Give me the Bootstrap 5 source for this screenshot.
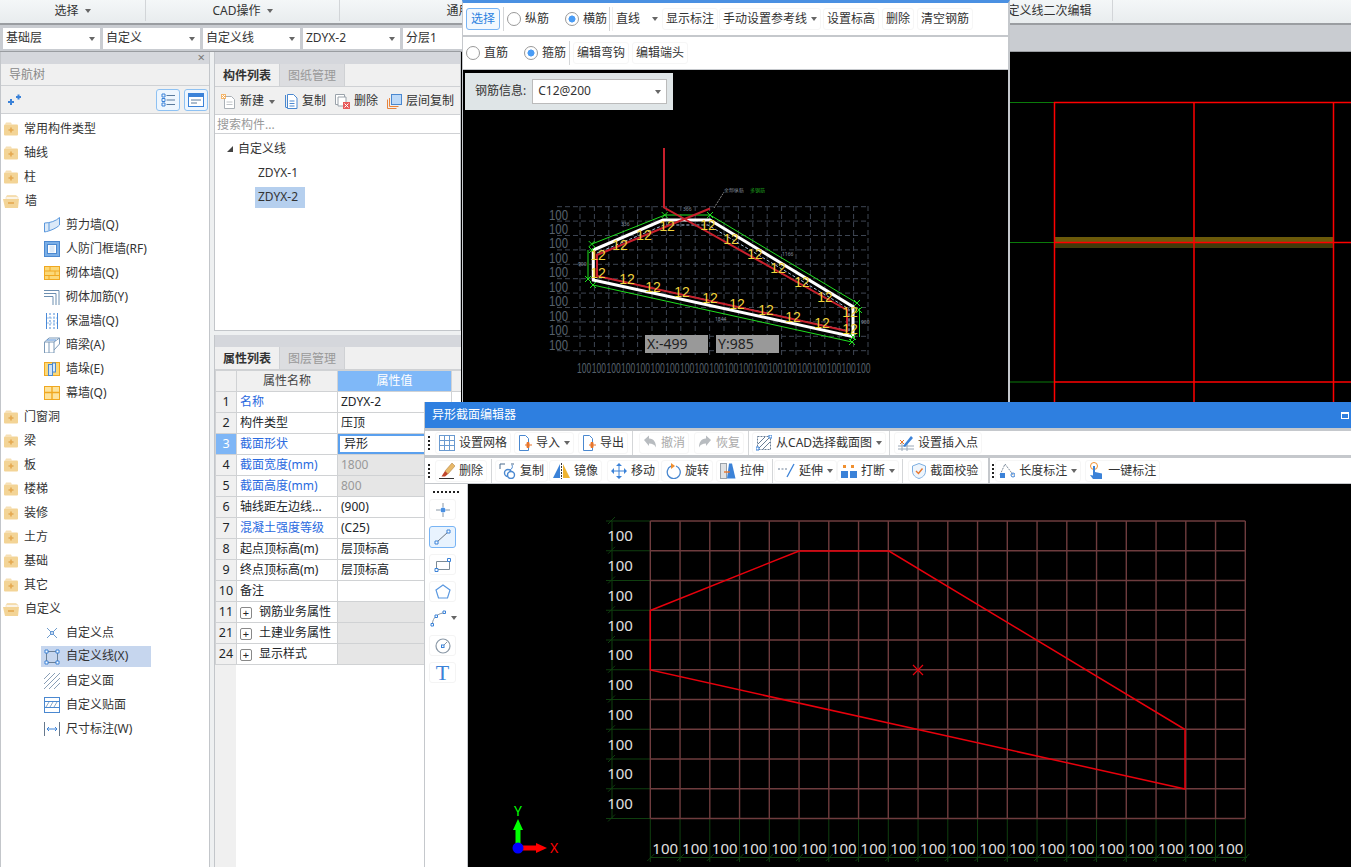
<!DOCTYPE html>
<html lang="zh">
<head>
<meta charset="UTF-8">
<title>异形截面编辑器</title>
<link rel="stylesheet" href="https://cdn.jsdelivr.net/npm/bootstrap@5.3.0/dist/css/bootstrap.min.css">
<style>
html, body { height: 867px; overflow: hidden; }
body { position: relative; width: 1351px; font: 12px/1.2 "Noto Sans", "Noto Sans CJK SC", sans-serif; color: #333; background: #eef0f1; }
.dropdown-toggle::after { border-top: 4px solid #666; border-left: 3px solid transparent; border-right: 3px solid transparent; border-bottom: 0; margin-left: 6px; vertical-align: 2px; }
.gl1 { margin-left: 1px; } .gl2 { margin-left: 2px; } .gl3 { margin-left: 3px; } .gl5 { margin-left: 5px; } .gl6 { margin-left: 6px; }

/* top menu */
.menu-bar { height: 25px; background: linear-gradient(#f4f7f8, #e8ecee); border-bottom: 2px solid #9a9da1; }
.menu-cell { height: 21px; padding-top: 2px; border-right: 1px solid #d2d5d8; justify-content: center; color: #333; }
.mc1 { width: 146px; } .mc2 { width: 194px; } .mc3 { width: 274px; } .mc4 { width: 361px; } .mc5 { width: 138px; }
.sel-bar { height: 27px; background: #c9ccd1; border-bottom: 1px solid #9a9da1; padding: 3px 0 0 3px; gap: 3px; }
.sel-box { width: 97px; height: 21px; background: #fff; padding: 0 3px; justify-content: space-between; }
.sel-box.dropdown-toggle::after { margin-right: 2px; }

/* left nav */
.main-row { height: 815px; }
.nav-side { width: 210px; background: #fff; border-left: 1px solid #c3c6ca; border-right: 1px solid #c3c6ca; }
.strip { height: 12px; background: #d5d7dc; color: #777; font-size: 13px; line-height: 11px; }
.side-title { height: 22px; background: #f0f0f0; color: #888; padding: 2px 0 0 8px; border-bottom: 1px solid #cfd1d4; }
.side-tools { height: 28px; background: #f0f0f0; border-bottom: 1px solid #cfd1d4; padding: 0 1px 0 7px; }
.view-btn { width: 24px; height: 22px; border: 1px solid #8ec1f2; border-radius: 3px; background: #eef6fe; margin-left: 4px; padding: 0; }
.nav-tree { padding-top: 3px; }
.nav-tree .list-group-item { height: 24px; padding: 0 0 0 2px; border: 0; gap: 5px; font-size: 12px; color: #333; background: transparent; }
.nav-tree .list-group-item.leaf { padding-left: 43px; gap: 6px; }
.leaf-on { background: #c6d6ee !important; margin-left: 40px; width: 110px; padding-left: 3px !important; height: 21px !important; margin-top: 1px; margin-bottom: 2px; }

/* middle panels */
.mid-col { width: 247px; margin-left: 4px; }
.mid-top { height: 279px; border: 1px solid #c3c6ca; border-top: 0; background: #fff; }
.mid-bottom { height: 532px; margin-top: 4px; border-left: 1px solid #c3c6ca; background: linear-gradient(90deg, #f0f0f0 21px, #fff 21px); }
.tab-row { height: 23px; background: #f0f0f0; border-bottom: 1px solid #cfd1d4; }
.tab-row .nav-link { width: 65px; height: 22px; padding: 0; line-height: 23px; text-align: center; font-size: 12px; color: #999; background: #dcdde0; border-right: 1px solid #cfd1d4; }
.tab-row .nav-link.active { color: #333; background: #f0f0f0; font-weight: 700; }
.mid-tools { height: 28px; background: #f0f0f0; border-bottom: 1px solid #cfd1d4; padding: 2px 0 0 6px; overflow: hidden; }
.mid-tool { gap: 4px; padding: 0; margin-right: 9px; font-size: 12px; color: #333; border: 0; background: none; flex: none; white-space: nowrap; }
.mid-tool.dropdown-toggle::after { margin-left: 1px; }
.find-box.form-control { height: 19px; border: 0; border-bottom: 1px solid #cfd1d4; border-radius: 0; padding: 1px 2px 0; font-size: 12px; }
.find-box::placeholder { color: #999; }
.part-tree { padding-top: 3px; }
.part-row { height: 24px; }
.part-open { padding-left: 12px; gap: 5px; }
.open-tri { width: 0; height: 0; border-bottom: 6px solid #444; border-left: 6px solid transparent; }
.part-leaf { margin-left: 40px; padding: 0 4px 0 3px; width: 50px; height: 21px; white-space: nowrap; }
.part-on { background: #b5cfee; margin-top: 2px; }

/* property table */
.prop-table.table { table-layout: fixed; width: 246px; margin: 0; --bs-table-bg: transparent; border-color: #d0d2d4; }
.prop-table th, .prop-table td { height: 21px; padding: 0 3px; font-size: 12px; font-weight: 400; line-height: 20px; white-space: nowrap; overflow: hidden; vertical-align: middle; }
.prop-table thead th { background: #f0f0f0; text-align: center; color: #444; }
.prop-table thead th.val-head { background: #7fb8f8; color: #fff; }
.prop-table .num-cell { background: #f0f0f0; text-align: center; padding: 0; font-size: 12.5px; }
.prop-table .num-on { background: #7eb6f6; color: #fff; }
.blue-name { color: #2a6ae0; }
.val-off { background: #e6e6e6 !important; color: #999; }
.val-group { background: #e6e6e6 !important; }
.prop-table.table > tbody > tr > td.val-edit { box-shadow: inset 0 0 0 2px #5aa0ee; padding-left: 6px; }
.plus-box { display: inline-block; width: 12px; height: 12px; border: 1px solid #888; border-radius: 2px; line-height: 9px; text-align: center; margin: 0 7px 0 0; font-size: 11px; vertical-align: -1px; }

/* back canvas */
.back-canvas { background: #000; }

/* floating windows */
.rebar-win { position: absolute; left: 462px; top: 0; width: 548px; height: 402px; background: #c5c8cc; border-top: 3px solid #4a90e2; border-left: 1px solid #c5c8cc; border-right: 2px solid #c5c8cc; }
.bar-row { height: 32px; background: #fff; padding-left: 3px; margin-bottom: 2px; }
.tb-item.btn { height: 22px; padding: 0 3px; border: 1px solid #f6f6f6; border-radius: 3px; font-size: 12px; line-height: 1; color: #333; background: #fff; gap: 4px; white-space: nowrap; flex: none; }
.tb-item.dropdown-toggle::after { margin-left: 0; }
.tb-on.btn { padding: 0 4px; border-color: #78b4f4; color: #2a80e0; background: #f2f8fe; }
.tb-off.btn { color: #aaa; opacity: 1; }
.rad-item { gap: 4px; flex: none; }
.rad-item .form-check-input { width: 14px; height: 14px; margin: 0; border-color: #999; }
.rad-item .form-check-input:checked { background-color: #fff; background-image: radial-gradient(circle, #4a9cf5 0 3.2px, transparent 3.8px); border-color: #999; }
.v-sep { width: 1px; height: 24px; background: #d4d6d8; flex: none; }
.thick-sep { width: 2px; height: 100%; background: #c5c8cc; flex: none; }
.line-pick { width: 46px; height: 24px; padding-left: 3px; border-left: 1px solid #f0f0f0; flex: none; justify-content: space-between; }
.line-pick.dropdown-toggle::after { margin: 0; }
.rebar-view { display: block; background: #000; width: 545px; height: 332px; margin-top: -1px; }
.rebar-info { position: absolute; left: 2px; top: 70px; width: 208px; height: 37px; background: #dfe5e7; padding: 6px 6px 6px 10px; gap: 6px; white-space: nowrap; }
.rebar-pick { width: 135px; height: 25px; background: #fff; border: 1px solid #bbb; padding: 0 5px; justify-content: space-between; flex: none; }

.edit-win { position: absolute; left: 424px; top: 402px; width: 927px; height: 465px; background: #c5c8cc; border-left: 1px solid #c5c8cc; }
.edit-title { height: 26px; background: #2e7fe0; color: #fff; padding: 0 2px 0 7px; justify-content: space-between; }
.max-mark { width: 8px; height: 7px; border: 1px solid #fff; border-top-width: 2px; }
.edit-bar { height: 26px; background: #fff; padding: 0 0 0 3px; border-bottom: 1px solid #c5c8cc; }
.edit-bar.first-bar { margin-top: 3px; height: 27px; border-bottom-width: 3px; }
.grip-dots { width: 2px; height: 14px; background: repeating-linear-gradient(#222 0 2px, transparent 2px 4px); flex: none; }
.edit-body { height: 383px; }
.draw-palette { width: 43px; background: #fff; border-right: 1px solid #c5c8cc; padding-top: 7px; flex: none; }
.dots-h { width: 26px; height: 2px; margin: 0 0 6px 8px; background: repeating-linear-gradient(90deg, #222 0 2px, transparent 2px 4px); }
.draw-tool { width: 27px; height: 21px; margin: 0 0 6px 4px; padding: 0; border: 1px solid #f4f4f4; border-radius: 3px; background: #fff; }
.draw-tool.on { height: 22px; border-color: #78b4f4; background: #e8f3fe; }
.draw-tool.bare { border-color: transparent; width: 36px; }
.t-glyph { font: 22px/1 "Liberation Serif", serif; color: #3b82d8; }
.edit-view { display: block; background: #000; flex: 1; }
svg { flex: none; }
.cad-dim { font: 5px "Noto Sans", sans-serif; fill: #8a93a0; }
</style>
</head>
<body>
<svg width="0" height="0" class="position-absolute">
  <symbol id="i-folder" viewBox="0 0 16 14"><path d="M2 2.500 3 .5h5l1 2z" fill="#f6e0b4"/><rect x="1" y="2.500" width="14" height="11" rx="1" fill="#f3d496"/><path d="M8 5.500v5M5.500 8h5" stroke="#e4a850" stroke-width="1.600"/></symbol>
  <symbol id="i-folder-open" viewBox="0 0 17 14"><path d="M3 3 4 1h9l2 2z" fill="#f6e0b4"/><path d="M3 3h12v2H3z" fill="#fff" stroke="#ecd29c" stroke-width=".5"/><path d="M0 5h16l-1 9H2z" fill="#f3d496"/><path d="M5 9h6" stroke="#e4a850" stroke-width="1.600"/></symbol>
  <symbol id="i-shear" viewBox="0 0 16 16"><path d="M.5 6C6 6 12 4 15.500 .5V8C13 11 6 14 .5 15z" fill="#dbe9f8" stroke="#5b98dc"/><path d="M.5 6V15M5 5.500v8" stroke="#5b98dc"/></symbol>
  <symbol id="i-door" viewBox="0 0 16 16"><rect x=".5" y=".5" width="15" height="15" fill="#7aaee6" stroke="#4a88d0"/><rect x="3.500" y="3.500" width="9" height="9" fill="#fff" stroke="#4a88d0"/><rect x="5.500" y="4.500" width="5" height="7" fill="#dbe9f8"/></symbol>
  <symbol id="i-brick" viewBox="0 0 16 14"><rect x=".5" y=".5" width="15" height="13" fill="#fbd878" stroke="#f0a820"/><path d="M.5 5h15M.5 9.500h15M6 .5V5M11 5v4.500M5 9.500v4" stroke="#f0a820"/></symbol>
  <symbol id="i-rebar" viewBox="0 0 16 16"><path d="M0 1.500h15V16M0 4.500h12V16M0 7.500h9V16" fill="none" stroke="#6d8fb0"/></symbol>
  <symbol id="i-insul" viewBox="0 0 16 16"><path d="M2.500 0v16M13.500 0v16" stroke="#4a8ad8"/><path d="M6 0v16M10 0v16" stroke="#4a8ad8" stroke-dasharray="2 1.500"/><path d="M3 5h10M3 10h10" stroke="#9cc2ea" stroke-dasharray="2 1"/></symbol>
  <symbol id="i-beam" viewBox="0 0 16 16"><path d="M.5 5 5 1h10.500v6L10 13v3H.5z" fill="#fff" stroke="#7c9ab8"/><path d="M.5 5H10v8M10 5l5.500-4M5 5v11" fill="none" stroke="#7c9ab8"/><path d="M3 3h9" stroke="#4a8ad8"/></symbol>
  <symbol id="i-pier" viewBox="0 0 16 14"><rect x=".5" y=".5" width="15" height="13" fill="#fbd878" stroke="#f0a820"/><rect x="4.500" y="2.500" width="4" height="11" fill="#cfe2f7" stroke="#4a88d0"/><rect x="8.500" y="1" width="3" height="9" fill="#dbe9f8" stroke="#4a88d0"/></symbol>
  <symbol id="i-curtain" viewBox="0 0 16 14"><rect x=".5" y=".5" width="15" height="13" fill="#fde39c" stroke="#f0a820"/><path d="M.5 6.500h15M8 .5v13" stroke="#f0a820" stroke-width="1.400"/></symbol>
  <symbol id="i-point" viewBox="0 0 16 16"><path d="M3 3l10 10M13 3 3 13" stroke="#6f9ccc"/><circle cx="8" cy="8" r="1.500" fill="#fff" stroke="#4a88d0"/></symbol>
  <symbol id="i-line" viewBox="0 0 16 16"><rect x="2.500" y="2.500" width="11" height="11" fill="none" stroke="#6a7f96"/><path d="M1 1h3v3H1zM12 1h3v3h-3zM1 12h3v3H1zM12 12h3v3h-3z" fill="#fff" stroke="#3b82d8"/></symbol>
  <symbol id="i-face" viewBox="0 0 16 16"><path d="M0 6 6 0M0 11 11 0M0 16 16 0M5 16 16 5M10 16l6-6" stroke="#8a9fb6"/></symbol>
  <symbol id="i-paste" viewBox="0 0 16 16"><rect x=".5" y=".5" width="15" height="15" fill="#fff" stroke="#4a88d0"/><path d="M.5 4.500h15M.5 10.500h15" stroke="#4a88d0"/><path d="M2 10 5 5M6 10l3-5M10 10l3-5" stroke="#8aa8c8"/></symbol>
  <symbol id="i-dim" viewBox="0 0 16 16"><path d="M.5 1v14M15.500 1v14" stroke="#66788c"/><path d="M3 8h10M5 6 3 8l2 2M11 6l2 2-2 2" fill="none" stroke="#3b82d8"/></symbol>
  <symbol id="i-new" viewBox="0 0 15 15"><path d="M3.500 2.500h7l3 3v9h-10z" fill="#fff" stroke="#aab0b6"/><path d="M5.500 8h6M5.500 10.500h6" stroke="#c0c4c8"/><path d="M0 0h5v5H0z" fill="#f6a84a" opacity=".8"/><path d="M1 1l3 3M4 1 1 4" stroke="#fff"/></symbol>
  <symbol id="i-copy" viewBox="0 0 14 15"><path d="M1.500 1v12M1.500 13.500h2" stroke="#4a88d0"/><path d="M3.500 .5h6l3.500 3.500v10.500h-9.500z" fill="#fff" stroke="#4a88d0"/><path d="M5.500 7h5M5.500 9.500h5M5.500 12h5" stroke="#4a88d0"/></symbol>
  <symbol id="i-del" viewBox="0 0 15 15"><path d="M.5 .5h9v10h-9z" fill="#fff" stroke="#9aa2aa"/><path d="M3 3h8v9H3z" fill="#fff" stroke="#9aa2aa"/><rect x="8" y="8" width="7" height="7" fill="#e85a5a"/><path d="M9.500 9.500l4 4M13.500 9.500l-4 4" stroke="#fff"/></symbol>
  <symbol id="i-floor" viewBox="0 0 15 15"><rect x="4.500" y=".5" width="10" height="10" fill="#bcd9f8" stroke="#4a88d0"/><path d="M.5 14.500V5.500M.5 14.500h9M2.500 12.500V4M2.500 12.500h9" fill="none" stroke="#e8843c"/></symbol>
  <symbol id="i-grid" viewBox="0 0 16 16"><rect x=".5" y=".5" width="15" height="15" fill="#fff" stroke="#6a9ad0"/><path d="M5.500 .5v15M10.500 .5v15M.5 5.500h15M.5 10.500h15" stroke="#6a9ad0"/></symbol>
  <symbol id="i-import" viewBox="0 0 14 16"><path d="M1.500 .5h6l3 3v12h-9z" fill="#fff" stroke="#4a88d0"/><path d="M7 10h7M9 7.500h2V12.500H9z" fill="#e8762c" stroke="#e8762c"/></symbol>
  <symbol id="i-undo" viewBox="0 0 14 16"><path d="M1 5 6 .5V3.500c5 0 7 4 7 9-1.500-3-3.500-4-7-4V11z" fill="#b8bcc0"/></symbol>
  <symbol id="i-redo" viewBox="0 0 14 16"><path d="M13 5 8 .5V3.500c-5 0-7 4-7 9 1.500-3 3.500-4 7-4V11z" fill="#b8bcc0"/></symbol>
  <symbol id="i-cad" viewBox="0 0 16 16"><rect x="1.500" y="1.500" width="13" height="13" fill="none" stroke="#6a7f96" stroke-dasharray="2 1"/><path d="M2 9l7-7M2 14 14 2M7 14l7-7" stroke="#6a7f96"/><path d="M0 12h3v3H0zM13 0h3v3h-3z" fill="#fff" stroke="#3b82d8"/></symbol>
  <symbol id="i-insert" viewBox="0 0 16 16"><path d="M0 11h16M0 14h16M4 8v8M9 8v8" stroke="#9aa8b8"/><path d="M5 11 13 1l2 2-8 9z" fill="#3b82d8"/><path d="M2 5l4 4M6 5 2 9" stroke="#e8762c"/></symbol>
  <symbol id="i-erase" viewBox="0 0 16 16"><path d="M6 8 13 0l3 3-7 8z" fill="#e8b868" stroke="#a8783a" stroke-width=".5"/><path d="M6 8l3 3-3 2.500H2.500z" fill="#c0462c"/><path d="M0 15.500h15" stroke="#333"/></symbol>
  <symbol id="i-dup" viewBox="0 0 17 16"><path d="M1 1h5M1 1v5M12 1h3" stroke="#4a6a8c"/><circle cx="9" cy="10" r="3.500" fill="#fff" stroke="#4a88d0" stroke-width="1.400"/><circle cx="12" cy="12" r="3.500" fill="#fff" stroke="#4a88d0" stroke-width="1.400"/><path d="M13 2c1 2 0 4-2 5" fill="none" stroke="#4a88d0"/></symbol>
  <symbol id="i-mirror" viewBox="0 0 17 16"><path d="M7 1v14H0z" fill="#3b82d8"/><path d="M10 1v14h7z" fill="#f0b430"/><path d="M8.500 0v16" stroke="#333" stroke-dasharray="2 1"/></symbol>
  <symbol id="i-move" viewBox="0 0 16 16"><path d="M8 1v14M1 8h14" stroke="#3b82d8"/><path d="M8 0l3 3H5zM8 16l-3-3h6zM0 8l3-3v6zM16 8l-3 3V5z" fill="#3b82d8"/></symbol>
  <symbol id="i-rotate" viewBox="0 0 16 16"><path d="M6 3.200A6.500 6.500 0 1 0 11 3" fill="none" stroke="#4a88d0" stroke-width="1.300"/><path d="M6 0l4 3-4 3z" fill="#f09030"/></symbol>
  <symbol id="i-stretch" viewBox="0 0 16 16"><rect x=".5" y=".5" width="6" height="15" fill="#e0e2e4" stroke="#9aa2aa"/><path d="M7 15.500 9 .5h3l3.500 15z" fill="#3b82d8"/><path d="M4 9h6" stroke="#e8762c" stroke-width="1.400"/></symbol>
  <symbol id="i-extend" viewBox="0 0 17 16"><path d="M0 6h10" stroke="#6a7f96" stroke-dasharray="2 1.500"/><path d="M16 1 9 14" stroke="#3b82d8" stroke-width="1.300"/></symbol>
  <symbol id="i-break" viewBox="0 0 16 16"><rect x="0" y="8" width="7" height="7" fill="#3b82d8"/><rect x="9" y="8" width="7" height="7" fill="#3b82d8"/><path d="M2 2h3v3H2zM10 2h3v3h-3z" fill="#f09030"/></symbol>
  <symbol id="i-check" viewBox="0 0 14 16"><path d="M7 .5 13.500 3v5c0 4-3 6.500-6.500 7.500C3.500 14.500.5 12 .5 8V3z" fill="#eef5fc" stroke="#7caee0"/><path d="M4 8l2.500 2.500L10.500 5.500" fill="none" stroke="#e8762c" stroke-width="1.400"/></symbol>
  <symbol id="i-length" viewBox="0 0 16 16"><path d="M1 12 6 1l9 12" fill="none" stroke="#7c8a9a" stroke-dasharray="2 1"/><rect x="1" y="10" width="5" height="5" fill="#3b82d8"/><circle cx="14" cy="12" r="2" fill="none" stroke="#3b82d8"/></symbol>
  <symbol id="i-touch" viewBox="0 0 15 17"><circle cx="5" cy="4" r="3.500" fill="none" stroke="#f09030"/><path d="M4 4h2v6l7 1.500V17H4l-3-4 3 .5z" fill="#3b82d8"/></symbol>
</svg>

<!-- 主窗口 -->
<div class="menu-bar d-flex">
  <div class="menu-cell mc1 d-flex align-items-center"><span class="dropdown-toggle">选择</span></div>
  <div class="menu-cell mc2 d-flex align-items-center"><span class="dropdown-toggle">CAD操作</span></div>
  <div class="menu-cell mc3 d-flex align-items-center"><span class="dropdown-toggle">通用操作</span></div>
  <div class="menu-cell mc4"></div>
  <div class="menu-cell mc5 d-flex align-items-center">自定义线二次编辑</div>
</div>
<div class="sel-bar d-flex">
  <div class="sel-box d-flex align-items-center dropdown-toggle">基础层</div>
  <div class="sel-box d-flex align-items-center dropdown-toggle">自定义</div>
  <div class="sel-box d-flex align-items-center dropdown-toggle">自定义线</div>
  <div class="sel-box d-flex align-items-center dropdown-toggle">ZDYX-2</div>
  <div class="sel-box d-flex align-items-center dropdown-toggle">分层1</div>
</div>

<div class="main-row d-flex">
  <div class="nav-side flex-shrink-0">
    <div class="strip text-end pe-1">×</div>
    <div class="side-title d-flex align-items-center">导航树</div>
    <div class="side-tools d-flex align-items-center justify-content-between">
      <svg width="13" height="12" viewBox="0 0 13 12"><path d="M0 8h6M3 5v6M8 3h5M10.500 .5v5" stroke="#3b82d8" stroke-width="2"/></svg>
      <div class="d-flex">
        <button class="view-btn d-flex align-items-center justify-content-center"><svg width="14" height="14" viewBox="0 0 14 14"><path d="M1 1h3v3H1zM1 5.500h3v3H1zM1 10h3v3H1z" fill="none" stroke="#3b82d8"/><path d="M5.500 2.500H14M5.500 7H14M5.500 11.500H14" stroke="#5a7a9c"/></svg></button>
        <button class="view-btn d-flex align-items-center justify-content-center"><svg width="16" height="14" viewBox="0 0 16 14"><rect x=".5" y=".5" width="15" height="13" fill="#fff" stroke="#3b82d8"/><path d="M1 1h14v3H1z" fill="#3b82d8"/><path d="M3 7h10M3 10h6" stroke="#5a7a9c"/></svg></button>
      </div>
    </div>
    <ul class="nav-tree list-group list-group-flush">
      <li class="list-group-item d-flex align-items-center"><svg width="16" height="14"><use href="#i-folder"/></svg>常用构件类型</li>
      <li class="list-group-item d-flex align-items-center"><svg width="16" height="14"><use href="#i-folder"/></svg>轴线</li>
      <li class="list-group-item d-flex align-items-center"><svg width="16" height="14"><use href="#i-folder"/></svg>柱</li>
      <li class="list-group-item d-flex align-items-center"><svg width="17" height="14"><use href="#i-folder-open"/></svg>墙</li>
      <li class="list-group-item leaf d-flex align-items-center"><svg width="16" height="16"><use href="#i-shear"/></svg>剪力墙(Q)</li>
      <li class="list-group-item leaf d-flex align-items-center"><svg width="16" height="16"><use href="#i-door"/></svg>人防门框墙(RF)</li>
      <li class="list-group-item leaf d-flex align-items-center"><svg width="16" height="14"><use href="#i-brick"/></svg>砌体墙(Q)</li>
      <li class="list-group-item leaf d-flex align-items-center"><svg width="16" height="16"><use href="#i-rebar"/></svg>砌体加筋(Y)</li>
      <li class="list-group-item leaf d-flex align-items-center"><svg width="16" height="16"><use href="#i-insul"/></svg>保温墙(Q)</li>
      <li class="list-group-item leaf d-flex align-items-center"><svg width="16" height="16"><use href="#i-beam"/></svg>暗梁(A)</li>
      <li class="list-group-item leaf d-flex align-items-center"><svg width="16" height="14"><use href="#i-pier"/></svg>墙垛(E)</li>
      <li class="list-group-item leaf d-flex align-items-center"><svg width="16" height="14"><use href="#i-curtain"/></svg>幕墙(Q)</li>
      <li class="list-group-item d-flex align-items-center"><svg width="16" height="14"><use href="#i-folder"/></svg>门窗洞</li>
      <li class="list-group-item d-flex align-items-center"><svg width="16" height="14"><use href="#i-folder"/></svg>梁</li>
      <li class="list-group-item d-flex align-items-center"><svg width="16" height="14"><use href="#i-folder"/></svg>板</li>
      <li class="list-group-item d-flex align-items-center"><svg width="16" height="14"><use href="#i-folder"/></svg>楼梯</li>
      <li class="list-group-item d-flex align-items-center"><svg width="16" height="14"><use href="#i-folder"/></svg>装修</li>
      <li class="list-group-item d-flex align-items-center"><svg width="16" height="14"><use href="#i-folder"/></svg>土方</li>
      <li class="list-group-item d-flex align-items-center"><svg width="16" height="14"><use href="#i-folder"/></svg>基础</li>
      <li class="list-group-item d-flex align-items-center"><svg width="16" height="14"><use href="#i-folder"/></svg>其它</li>
      <li class="list-group-item d-flex align-items-center"><svg width="17" height="14"><use href="#i-folder-open"/></svg>自定义</li>
      <li class="list-group-item leaf d-flex align-items-center"><svg width="16" height="16"><use href="#i-point"/></svg>自定义点</li>
      <li class="list-group-item leaf leaf-on d-flex align-items-center"><svg width="16" height="16"><use href="#i-line"/></svg>自定义线(X)</li>
      <li class="list-group-item leaf d-flex align-items-center"><svg width="16" height="16"><use href="#i-face"/></svg>自定义面</li>
      <li class="list-group-item leaf d-flex align-items-center"><svg width="16" height="16"><use href="#i-paste"/></svg>自定义贴面</li>
      <li class="list-group-item leaf d-flex align-items-center"><svg width="16" height="16"><use href="#i-dim"/></svg>尺寸标注(W)</li>
    </ul>
  </div>

  <div class="mid-col flex-shrink-0">
    <div class="mid-top">
      <div class="strip"></div>
      <ul class="nav tab-row">
        <li class="nav-item"><span class="nav-link active">构件列表</span></li>
        <li class="nav-item"><span class="nav-link">图纸管理</span></li>
      </ul>
      <div class="mid-tools d-flex align-items-center">
        <button class="mid-tool dropdown-toggle d-flex align-items-center"><svg width="15" height="15"><use href="#i-new"/></svg>新建</button>
        <button class="mid-tool d-flex align-items-center"><svg width="14" height="15"><use href="#i-copy"/></svg>复制</button>
        <button class="mid-tool d-flex align-items-center"><svg width="15" height="15"><use href="#i-del"/></svg>删除</button>
        <button class="mid-tool d-flex align-items-center"><svg width="15" height="15"><use href="#i-floor"/></svg>层间复制</button>
      </div>
      <input class="find-box form-control" type="text" placeholder="搜索构件...">
      <div class="part-tree">
        <div class="part-row part-open d-flex align-items-center"><span class="open-tri"></span>自定义线</div>
        <div class="part-row d-flex align-items-center"><span class="part-leaf d-flex align-items-center">ZDYX-1</span></div>
        <div class="part-leaf part-on d-flex align-items-center">ZDYX-2</div>
      </div>
    </div>
    <div class="mid-bottom">
      <div class="strip"></div>
      <ul class="nav tab-row">
        <li class="nav-item"><span class="nav-link active">属性列表</span></li>
        <li class="nav-item"><span class="nav-link">图层管理</span></li>
      </ul>
      <table class="table table-bordered prop-table">
        <colgroup><col width="21"><col width="101"><col width="114"><col width="10"></colgroup>
        <thead><tr><th></th><th>属性名称</th><th class="val-head">属性值</th><th></th></tr></thead>
        <tbody>
          <tr><td class="num-cell">1</td><td class="blue-name">名称</td><td>ZDYX-2</td><td></td></tr>
          <tr><td class="num-cell">2</td><td>构件类型</td><td>压顶</td><td></td></tr>
          <tr><td class="num-cell num-on">3</td><td class="blue-name">截面形状</td><td class="val-edit">异形</td><td></td></tr>
          <tr><td class="num-cell">4</td><td class="blue-name">截面宽度(mm)</td><td class="val-off">1800</td><td></td></tr>
          <tr><td class="num-cell">5</td><td class="blue-name">截面高度(mm)</td><td class="val-off">800</td><td></td></tr>
          <tr><td class="num-cell">6</td><td>轴线距左边线...</td><td>(900)</td><td></td></tr>
          <tr><td class="num-cell">7</td><td class="blue-name">混凝土强度等级</td><td>(C25)</td><td></td></tr>
          <tr><td class="num-cell">8</td><td>起点顶标高(m)</td><td>层顶标高</td><td></td></tr>
          <tr><td class="num-cell">9</td><td>终点顶标高(m)</td><td>层顶标高</td><td></td></tr>
          <tr><td class="num-cell">10</td><td>备注</td><td></td><td></td></tr>
          <tr><td class="num-cell">11</td><td><span class="plus-box">+</span>钢筋业务属性</td><td class="val-group"></td><td></td></tr>
          <tr><td class="num-cell">21</td><td><span class="plus-box">+</span>土建业务属性</td><td class="val-group"></td><td></td></tr>
          <tr><td class="num-cell">24</td><td><span class="plus-box">+</span>显示样式</td><td class="val-group"></td><td></td></tr>
        </tbody>
      </table>
    </div>
  </div>

  <div class="back-canvas flex-grow-1">
    <svg width="890" height="350" viewBox="461 52 890 350">
      <path d="M1010 102.500h44M1010 242.500h44M1010 382h44" stroke="#0a7a0a"/>
      <rect x="1055" y="237" width="278" height="5" fill="#6b5a0a"/>
      <rect x="1055" y="243" width="278" height="5" fill="#403a0a"/>
      <path d="M1054 102.500h297M1054 242.500h297M1054 382h297M1054.500 102v300M1194 102v300M1333.500 102v300" stroke="#f00" stroke-width="1.500" fill="none"/>
    </svg>
  </div>
</div>

<!-- 钢筋编辑窗口 -->
<div class="rebar-win">
  <div class="bar-row d-flex align-items-center">
    <button class="btn tb-item tb-on d-inline-flex align-items-center">选择</button>
    <span class="v-sep gl3"></span>
    <label class="rad-item gl3 d-flex align-items-center"><input class="form-check-input" type="radio" name="dir">纵筋</label>
    <label class="rad-item d-flex align-items-center ms-3"><input class="form-check-input" type="radio" name="dir" checked>横筋</label>
    <span class="v-sep gl2"></span>
    <div class="line-pick gl2 d-flex align-items-center dropdown-toggle">直线</div>
    <button class="btn tb-item ms-1 d-inline-flex align-items-center">显示标注</button>
    <button class="btn tb-item gl1 dropdown-toggle d-inline-flex align-items-center">手动设置参考线</button>
    <button class="btn tb-item gl2 d-inline-flex align-items-center">设置标高</button>
    <button class="btn tb-item gl3 d-inline-flex align-items-center">删除</button>
    <button class="btn tb-item gl3 d-inline-flex align-items-center">清空钢筋</button>
  </div>
  <div class="bar-row d-flex align-items-center">
    <label class="rad-item d-flex align-items-center"><input class="form-check-input" type="radio" name="kind">直筋</label>
    <label class="rad-item d-flex align-items-center ms-3"><input class="form-check-input" type="radio" name="kind" checked>箍筋</label>
    <span class="v-sep gl3"></span>
    <button class="btn tb-item gl3 d-inline-flex align-items-center">编辑弯钩</button>
    <button class="btn tb-item gl3 d-inline-flex align-items-center">编辑端头</button>
  </div>
  <svg class="rebar-view" id="rebarView" viewBox="463 70 545 332"></svg>
  <div class="rebar-info d-flex align-items-center">
    <span>钢筋信息:</span>
    <div class="rebar-pick d-flex align-items-center dropdown-toggle">C12@200</div>
  </div>
</div>

<!-- 异形截面编辑器 -->
<div class="edit-win">
  <div class="edit-title d-flex align-items-center"><span>异形截面编辑器</span><span class="max-mark"></span></div>
  <div class="edit-bar first-bar d-flex align-items-center">
    <span class="grip-dots"></span>
    <button class="btn tb-item gl5 d-inline-flex align-items-center"><svg width="16" height="16"><use href="#i-grid"/></svg>设置网格</button>
    <button class="btn tb-item gl3 dropdown-toggle d-inline-flex align-items-center"><svg width="14" height="16"><use href="#i-import"/></svg>导入</button>
    <button class="btn tb-item ms-1 d-inline-flex align-items-center"><svg width="14" height="16"><use href="#i-import"/></svg>导出</button>
    <span class="v-sep ms-1"></span>
    <button class="btn tb-item tb-off gl6 d-inline-flex align-items-center"><svg width="14" height="16"><use href="#i-undo"/></svg>撤消</button>
    <button class="btn tb-item tb-off gl5 d-inline-flex align-items-center"><svg width="14" height="16"><use href="#i-redo"/></svg>恢复</button>
    <span class="v-sep ms-1"></span>
    <button class="btn tb-item gl3 dropdown-toggle d-inline-flex align-items-center"><svg width="16" height="16"><use href="#i-cad"/></svg>从CAD选择截面图</button>
    <span class="v-sep gl3"></span>
    <button class="btn tb-item ms-1 d-inline-flex align-items-center"><svg width="16" height="16"><use href="#i-insert"/></svg>设置插入点</button>
  </div>
  <div class="edit-bar d-flex align-items-center">
    <span class="grip-dots"></span>
    <button class="btn tb-item gl5 d-inline-flex align-items-center"><svg width="16" height="16"><use href="#i-erase"/></svg>删除</button>
    <span class="v-sep ms-1"></span>
    <button class="btn tb-item gl3 d-inline-flex align-items-center"><svg width="17" height="16"><use href="#i-dup"/></svg>复制</button>
    <button class="btn tb-item gl1 d-inline-flex align-items-center"><svg width="17" height="16"><use href="#i-mirror"/></svg>镜像</button>
    <button class="btn tb-item gl5 d-inline-flex align-items-center"><svg width="16" height="16"><use href="#i-move"/></svg>移动</button>
    <button class="btn tb-item gl2 d-inline-flex align-items-center"><svg width="16" height="16"><use href="#i-rotate"/></svg>旋转</button>
    <button class="btn tb-item gl3 d-inline-flex align-items-center"><svg width="16" height="16"><use href="#i-stretch"/></svg>拉伸</button>
    <span class="v-sep ms-1"></span>
    <button class="btn tb-item gl1 dropdown-toggle d-inline-flex align-items-center"><svg width="17" height="16"><use href="#i-extend"/></svg>延伸</button>
    <button class="btn tb-item dropdown-toggle d-inline-flex align-items-center"><svg width="16" height="16"><use href="#i-break"/></svg>打断</button>
    <span class="v-sep gl3"></span>
    <button class="btn tb-item gl5 d-inline-flex align-items-center"><svg width="14" height="16"><use href="#i-check"/></svg>截面校验</button>
    <span class="thick-sep gl6"></span>
    <span class="grip-dots gl2"></span>
    <button class="btn tb-item gl1 dropdown-toggle d-inline-flex align-items-center"><svg width="16" height="16"><use href="#i-length"/></svg>长度标注</button>
    <button class="btn tb-item ms-1 d-inline-flex align-items-center"><svg width="15" height="17"><use href="#i-touch"/></svg>一键标注</button>
  </div>
  <div class="edit-body d-flex">
    <div class="draw-palette">
      <div class="dots-h"></div>
      <button class="draw-tool d-flex align-items-center justify-content-center"><svg width="16" height="16" viewBox="0 0 16 16"><path d="M1 8h4M11 8h4M8 1v4M8 11v4" stroke="#8a98a6"/><circle cx="8" cy="8" r="2.500" fill="#4a90e2"/></svg></button>
      <button class="draw-tool on d-flex align-items-center justify-content-center"><svg width="17" height="16" viewBox="0 0 17 16"><path d="M3 13 14 3" stroke="#6a7480"/><path d="M1 12h3v3H1zM13 1h3v3h-3z" fill="#fff" stroke="#3b82d8"/></svg></button>
      <button class="draw-tool d-flex align-items-center justify-content-center"><svg width="17" height="14" viewBox="0 0 17 14"><path d="M2.500 3.500h13v8h-13z" fill="none" stroke="#7c8a96"/><path d="M1 10.500h3v3H1zM13.500 .5h3v3h-3z" fill="#fff" stroke="#3b82d8"/></svg></button>
      <button class="draw-tool d-flex align-items-center justify-content-center"><svg width="16" height="15" viewBox="0 0 16 15"><path d="M8 1 15 6l-2.500 8h-9L1 6z" fill="#fff" stroke="#5a98e0" stroke-width="1.200"/></svg></button>
      <button class="draw-tool bare d-flex align-items-center"><svg width="17" height="17" viewBox="0 0 17 17"><path d="M2.500 13C3 8 7 4 13 3" fill="none" stroke="#8a98a6"/><path d="M1 13.500h2.500v2.500H1zM5 5h2.500v2.500H5zM13 1h2.500v2.500H13z" fill="#fff" stroke="#3b82d8"/></svg><span class="dropdown-toggle ms-1"></span></button>
      <button class="draw-tool d-flex align-items-center justify-content-center"><svg width="16" height="16" viewBox="0 0 16 16"><circle cx="8" cy="8" r="7" fill="none" stroke="#8a98a6" stroke-width="1.200"/><path d="M8 8l4-4" stroke="#8a98a6"/><rect x="6.500" y="7" width="2.500" height="2.500" fill="#fff" stroke="#3b82d8"/></svg></button>
      <button class="draw-tool d-flex align-items-center justify-content-center"><span class="t-glyph">T</span></button>
    </div>
    <svg class="edit-view" id="editView" viewBox="468 484 883 383"></svg>
  </div>
</div>

<script>
// 钢筋预览
(function () {
  var s = '', i, x, y;
  for (i = 0; i <= 10; i++) { y = 206.7 + i * 14.4; s += '<path d="M557 ' + y + 'H868" stroke="#3e4653" stroke-dasharray="5 3"/>'; }
  for (i = 0; i <= 20; i++) { x = 580 + i * 14.4; s += '<path d="M' + x + ' 206V358" stroke="#3e4653" stroke-dasharray="5 3"/>'; }
  for (i = 0; i < 10; i++) { s += '<text transform="translate(549 ' + (219.500 + i * 14.45) + ') scale(.76 1)" font-family="Liberation Sans" font-size="15" fill="#56606c">100</text>'; }
  for (i = 0; i < 20; i++) { s += '<text transform="translate(' + (577 + i * 14.7) + ' 373) scale(.57 1)" font-family="Liberation Sans" font-size="15" fill="#56606c">100</text>'; }
  s += '<polygon points="597,253 664,225 708,225 849,309 849,331 597,276" fill="none" stroke="#a8c0e0" stroke-dasharray="3 2"/>';
  s += '<polygon points="593.300,250 663,220 710,220 853,306.700 853,336.700 593.300,280" fill="none" stroke="#fff" stroke-width="3"/>';
  s += '<path d="M592 244 665 215H710L857 303M593 285 852 342M588 250V279M859.500 308V337" fill="none" stroke="#1fe01f"/>';
  [[591.700,244],[664.700,215],[710,215],[857,303],[852,342],[593,285],[592,250],[859,310],[588,279],[853,337]].forEach(function (p) {
    s += '<path d="M' + (p[0] - 3) + ' ' + (p[1] - 3) + 'l6 6m0-6l-6 6" stroke="#1fe01f"/>';
  });
  s += '<path d="M664 148V207.500L847 310V331L597 276V255L710 208.500" fill="none" stroke="#c8202c" stroke-width="2"/>';
  [[598,255],[620,245],[644,235],[667,226],[708,225],[731,239],[755,254],[778,268],[802,282],[825,297],[850,312],[850,329],[822,323],[793,317],[766,310],[737,304],[710,298],[682,292],[653,287],[627,279],[598,273]].forEach(function (p) {
    s += '<text x="' + p[0] + '" y="' + (p[1] + 5) + '" text-anchor="middle" font-family="Liberation Sans" font-size="14" fill="#f0d43c">12</text>';
  });
  s += '<path d="M714 208 724 192" stroke="#888" stroke-dasharray="2 1"/>';
  s += '<text class="cad-dim" x="724" y="192">全部纵筋</text><text x="750" y="192" font-size="5" fill="#1fa01f">多钢筋</text>';
  s += '<text class="cad-dim" x="683" y="211">366</text><text class="cad-dim" x="621" y="226">336</text><text class="cad-dim" x="782" y="256">1166</text><text class="cad-dim" x="715" y="321">1844</text><text class="cad-dim" x="578" y="266">900</text><text class="cad-dim" x="861" y="324">900</text>';
  s += '<rect x="645" y="335" width="63" height="18" fill="#999"/><rect x="716" y="335" width="63" height="18" fill="#999"/>';
  s += '<text x="647" y="349" font-family="Noto Sans" font-size="14" fill="#222">X:-499</text><text x="718" y="349" font-family="Noto Sans" font-size="14" fill="#222">Y:985</text>';
  document.getElementById('rebarView').innerHTML = s;
})();

// 截面网格
(function () {
  var s = '', i, x, y, L = 650.300, T = 521, C = 29.750;
  for (i = 0; i <= 10; i++) { y = T + i * C; s += '<path d="M606 ' + y + 'H650" stroke="#0f3f0f"/><path d="M608 ' + (y + 3) + 'l7-7" stroke="#0f3f0f"/>'; }
  s += '<path d="M612 521V819" stroke="#0f3f0f"/>';
  for (i = 0; i <= 20; i++) { x = L + i * C; s += '<path d="M' + x + ' 819V862" stroke="#0f3f0f"/><path d="M' + (x - 3) + ' 861l7-7" stroke="#0f3f0f"/>'; }
  s += '<path d="M650 857.500H1247" stroke="#0f3f0f"/>';
  for (i = 0; i <= 10; i++) { y = T + i * C; s += '<path d="M' + L + ' ' + y + 'H' + (L + 20 * C) + '" stroke="#6e3c3e" stroke-width="1.400"/>'; }
  for (i = 0; i <= 20; i++) { x = L + i * C; s += '<path d="M' + x + ' ' + T + 'V' + (T + 10 * C) + '" stroke="#6e3c3e" stroke-width="1.400"/>'; }
  for (i = 0; i < 10; i++) { s += '<text x="620" y="' + (T + (i + .5) * C + 5.500) + '" text-anchor="middle" font-family="Noto Sans" font-size="15" fill="#e0e0e0">100</text>'; }
  for (i = 0; i < 20; i++) { s += '<text x="' + (L + (i + .5) * C) + '" y="854" text-anchor="middle" font-family="Noto Sans" font-size="15" fill="#e0e0e0">100</text>'; }
  s += '<polygon points="650.300,610.500 799,551 889,551 1185,729.500 1185,789 650.300,670" fill="none" stroke="#e8000c" stroke-width="1.500"/>';
  s += '<path d="M913 665l10 10m0-10l-10 10" stroke="#e8000c" stroke-width="1.200"/>';
  s += '<path d="M518 848V828" stroke="#0f0" stroke-width="5"/><path d="M518 819l5 11h-10z" fill="#0f0"/>';
  s += '<path d="M518 848H536" stroke="#f00" stroke-width="5"/><path d="M547 848l-11-5v10z" fill="#f00"/>';
  s += '<circle cx="518" cy="848" r="5.500" fill="#00f"/>';
  s += '<text x="518" y="816" text-anchor="middle" font-family="Noto Sans" font-size="14" fill="#0f0">Y</text><text x="554" y="853" text-anchor="middle" font-family="Noto Sans" font-size="14" fill="#f00">X</text>';
  document.getElementById('editView').innerHTML = s;
})();
</script>
<script src="https://cdn.jsdelivr.net/npm/bootstrap@5.3.0/dist/js/bootstrap.bundle.min.js"></script>
</body>
</html>
